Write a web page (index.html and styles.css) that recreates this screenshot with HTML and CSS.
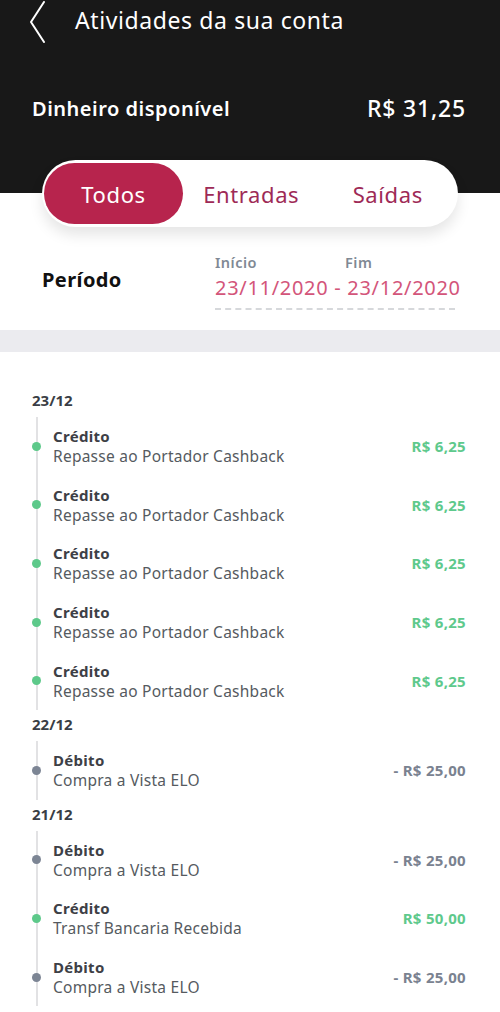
FILE: index.html
```html
<!DOCTYPE html>
<html lang="pt-BR">
<head>
  <meta charset="UTF-8" />
  <meta name="viewport" content="width=device-width, initial-scale=1.0"/>
  <title>Atividades da sua conta</title>
  <link rel="stylesheet" href="styles.css">
</head>
<body>
  <div class="page">
    <div class="top">
      <div class="top-bar">
        <button class="back-btn" aria-label="Voltar">
          <svg width="18" height="42" viewBox="0 0 18 42"><path d="M16 1 L3 21 L16 41" fill="none" stroke="#fff" stroke-width="2" stroke-linecap="round" stroke-linejoin="round"/></svg>
        </button>
        <div class="top-title">Atividades da sua conta</div>
      </div>
      <div class="balance">
        <span class="balance-label">Dinheiro disponível</span>
        <span class="balance-value">R$ 31,25</span>
      </div>
    </div>

    <div class="tabs">
      <div class="tab active">Todos</div>
      <div class="tab">Entradas</div>
      <div class="tab">Saídas</div>
    </div>

    <div class="period">
      <div class="period-title">Período</div>
      <div class="period-range">
        <div class="period-labels">
          <span class="lbl-start">Início</span>
          <span>Fim</span>
        </div>
        <div class="period-dates">23/11/2020 - 23/12/2020</div>
      </div>
    </div>

    <div class="divider"></div>

    <div class="activity">
      <div class="group">
        <div class="group-date">23/12</div>
        <div class="items">
          <div class="item credit">
            <div class="item-text"><div class="item-type">Crédito</div><div class="item-desc">Repasse ao Portador Cashback</div></div>
            <div class="item-amount">R$ 6,25</div>
          </div>
          <div class="item credit">
            <div class="item-text"><div class="item-type">Crédito</div><div class="item-desc">Repasse ao Portador Cashback</div></div>
            <div class="item-amount">R$ 6,25</div>
          </div>
          <div class="item credit">
            <div class="item-text"><div class="item-type">Crédito</div><div class="item-desc">Repasse ao Portador Cashback</div></div>
            <div class="item-amount">R$ 6,25</div>
          </div>
          <div class="item credit">
            <div class="item-text"><div class="item-type">Crédito</div><div class="item-desc">Repasse ao Portador Cashback</div></div>
            <div class="item-amount">R$ 6,25</div>
          </div>
          <div class="item credit">
            <div class="item-text"><div class="item-type">Crédito</div><div class="item-desc">Repasse ao Portador Cashback</div></div>
            <div class="item-amount">R$ 6,25</div>
          </div>
        </div>
      </div>

      <div class="group">
        <div class="group-date">22/12</div>
        <div class="items">
          <div class="item debit">
            <div class="item-text"><div class="item-type">Débito</div><div class="item-desc">Compra a Vista ELO</div></div>
            <div class="item-amount">- R$ 25,00</div>
          </div>
        </div>
      </div>

      <div class="group">
        <div class="group-date">21/12</div>
        <div class="items">
          <div class="item debit">
            <div class="item-text"><div class="item-type">Débito</div><div class="item-desc">Compra a Vista ELO</div></div>
            <div class="item-amount">- R$ 25,00</div>
          </div>
          <div class="item credit">
            <div class="item-text"><div class="item-type">Crédito</div><div class="item-desc">Transf Bancaria Recebida</div></div>
            <div class="item-amount">R$ 50,00</div>
          </div>
          <div class="item debit">
            <div class="item-text"><div class="item-type">Débito</div><div class="item-desc">Compra a Vista ELO</div></div>
            <div class="item-amount">- R$ 25,00</div>
          </div>
        </div>
      </div>
    </div>
  </div>
</body>
</html>
```

FILE: styles.css
```css
* {
  box-sizing: border-box;
}
body {
  margin: 0;
  font-family: "Noto Sans", "Open Sans", sans-serif;
  background: #ffffff;
  color: #3d4046;
}

.page {
  width: 500px;
  min-height: 1012px;
  overflow: hidden;
}

/* black header */
.top {
  background: #181818;
  height: 193px;
  color: #fff;
}

.top-bar {
  height: 44px;
  display: flex;
  align-items: center;
  padding-left: 28px;
}

.back-btn {
  background: none;
  border: none;
  padding: 0;
  width: 18px;
  height: 42px;
  display: flex;
}

.top-title {
  margin-left: 29px;
  font-size: 23px;
  letter-spacing: 0.6px;
  line-height: 30px;
  padding-bottom: 4px;
}

.balance {
  display: flex;
  justify-content: space-between;
  align-items: center;
  padding: 48px 34px 0 32px;
}

.balance-label {
  font-size: 20px;
  font-weight: 600;
  letter-spacing: 0.5px;
}

.balance-value {
  font-size: 23px;
  font-weight: 500;
  letter-spacing: 0.8px;
}

/* tabs pill */
.tabs {
  position: relative;
  margin: -33px 42px 0;
  height: 67px;
  background: #fff;
  border-radius: 34px;
  padding: 3px 2px;
  display: flex;
  box-shadow: 0 8px 14px rgba(0, 0, 0, 0.10);
}

.tab {
  flex: 1;
  display: flex;
  align-items: center;
  justify-content: center;
  font-size: 22px;
  letter-spacing: 0.6px;
  color: #9e2a56;
}

.tab.active {
  flex: 0 0 139px;
  background: #b7244d;
  color: #fff;
  border-radius: 31px;
}

/* period */
.period {
  display: flex;
  align-items: center;
  padding: 26px 45px 20px 42px;
}

.period-title {
  font-size: 20px;
  font-weight: 700;
  letter-spacing: 0.4px;
  color: #111;
  padding-bottom: 4px;
}

.period-range {
  margin-left: auto;
  width: 240px;
}

.period-labels {
  display: flex;
  font-size: 14.5px;
  font-weight: 600;
  letter-spacing: 0.5px;
  line-height: 18px;
  color: #7f8994;
}

.lbl-start {
  width: 130px;
}

.period-dates {
  margin-top: 4px;
  font-size: 20px;
  letter-spacing: 0.7px;
  line-height: 26px;
  color: #d3557a;
  white-space: nowrap;
  padding-bottom: 7px;
  border-bottom: 2px dashed #d6d8db;
}

.divider {
  height: 22px;
  background: #ebebef;
}

/* timeline list */
.activity {
  padding: 38px 34px 0 32px;
}

.group {
  margin-bottom: 4px;
}

.group-date {
  font-size: 15px;
  font-weight: 700;
  line-height: 20px;
  color: #3a3e45;
  margin-bottom: 7px;
}

.items {
  margin-left: 4px;
  border-left: 2px solid #e2e2e4;
  padding-left: 15px;
}

.item {
  position: relative;
  display: flex;
  align-items: center;
  justify-content: space-between;
  padding: 9.3px 0;
}

.item::before {
  content: "";
  position: absolute;
  left: -21.5px;
  top: 50%;
  width: 9px;
  height: 9px;
  margin-top: -4.5px;
  border-radius: 50%;
  background: #5dc98a;
}

.item.debit::before {
  background: #7c8594;
}

.item-type {
  font-size: 15px;
  font-weight: 700;
  letter-spacing: 0.3px;
  line-height: 20px;
  color: #3d4046;
}

.item-desc {
  font-size: 15.5px;
  letter-spacing: 0.25px;
  line-height: 20px;
  color: #555a60;
}

.item-amount {
  font-size: 15px;
  font-weight: 700;
  letter-spacing: 0.3px;
  color: #5ec98c;
}

.item.debit .item-amount {
  color: #7a8290;
}
```
